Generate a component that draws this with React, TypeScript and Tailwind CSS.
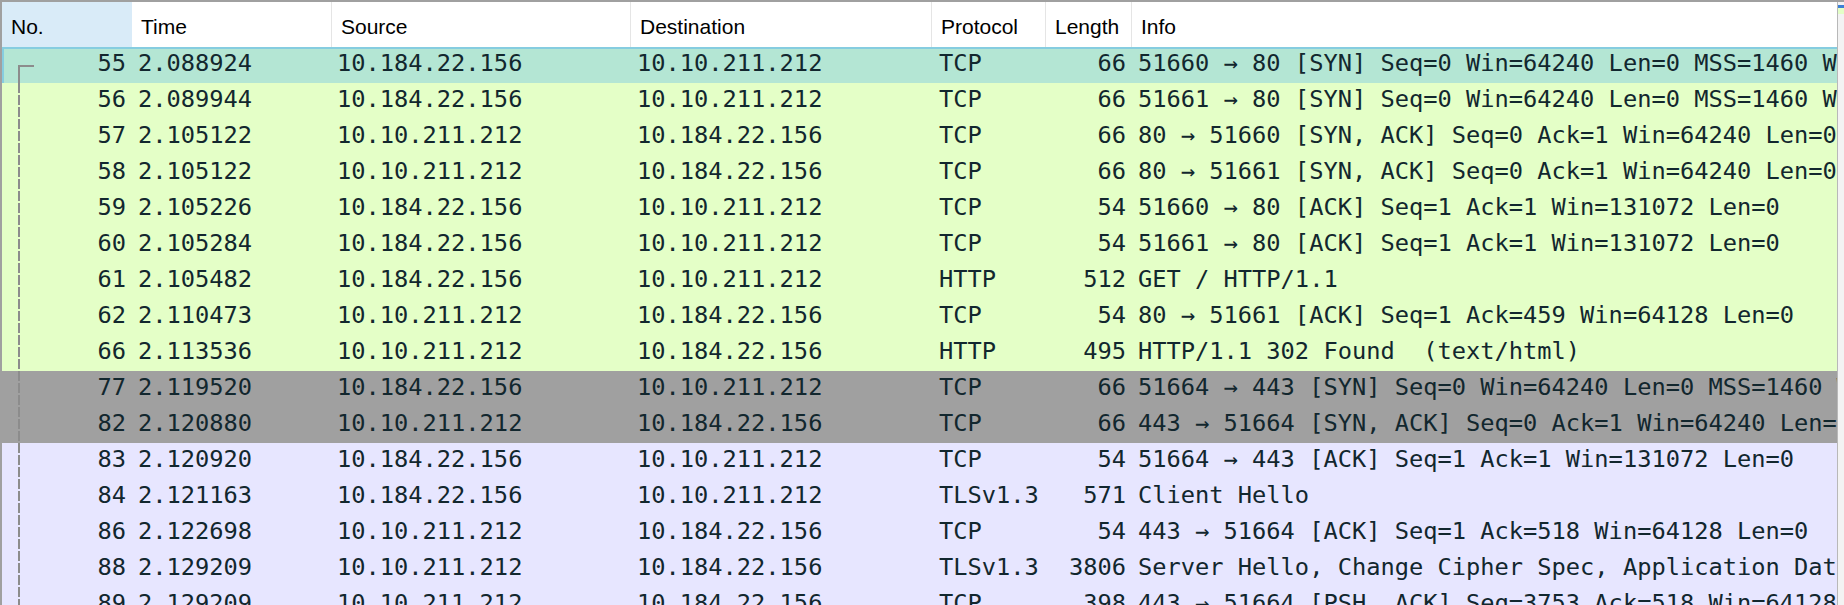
import React from 'react';

type Packet = {
  no: number;
  time: string;
  src: string;
  dst: string;
  proto: string;
  len: number;
  info: string;
  kind: 'sel' | 'http' | 'syn' | 'tcp';
};

const packets: Packet[] = [
  { no: 55, time: '2.088924', src: '10.184.22.156', dst: '10.10.211.212', proto: 'TCP', len: 66, info: '51660 → 80 [SYN] Seq=0 Win=64240 Len=0 MSS=1460 WS=256 SACK_PERM', kind: 'sel' },
  { no: 56, time: '2.089944', src: '10.184.22.156', dst: '10.10.211.212', proto: 'TCP', len: 66, info: '51661 → 80 [SYN] Seq=0 Win=64240 Len=0 MSS=1460 WS=256 SACK_PERM', kind: 'http' },
  { no: 57, time: '2.105122', src: '10.10.211.212', dst: '10.184.22.156', proto: 'TCP', len: 66, info: '80 → 51660 [SYN, ACK] Seq=0 Ack=1 Win=64240 Len=0 MSS=1460 WS=256 SACK_PERM', kind: 'http' },
  { no: 58, time: '2.105122', src: '10.10.211.212', dst: '10.184.22.156', proto: 'TCP', len: 66, info: '80 → 51661 [SYN, ACK] Seq=0 Ack=1 Win=64240 Len=0 MSS=1460 WS=256 SACK_PERM', kind: 'http' },
  { no: 59, time: '2.105226', src: '10.184.22.156', dst: '10.10.211.212', proto: 'TCP', len: 54, info: '51660 → 80 [ACK] Seq=1 Ack=1 Win=131072 Len=0', kind: 'http' },
  { no: 60, time: '2.105284', src: '10.184.22.156', dst: '10.10.211.212', proto: 'TCP', len: 54, info: '51661 → 80 [ACK] Seq=1 Ack=1 Win=131072 Len=0', kind: 'http' },
  { no: 61, time: '2.105482', src: '10.184.22.156', dst: '10.10.211.212', proto: 'HTTP', len: 512, info: 'GET / HTTP/1.1', kind: 'http' },
  { no: 62, time: '2.110473', src: '10.10.211.212', dst: '10.184.22.156', proto: 'TCP', len: 54, info: '80 → 51661 [ACK] Seq=1 Ack=459 Win=64128 Len=0', kind: 'http' },
  { no: 66, time: '2.113536', src: '10.10.211.212', dst: '10.184.22.156', proto: 'HTTP', len: 495, info: 'HTTP/1.1 302 Found  (text/html)', kind: 'http' },
  { no: 77, time: '2.119520', src: '10.184.22.156', dst: '10.10.211.212', proto: 'TCP', len: 66, info: '51664 → 443 [SYN] Seq=0 Win=64240 Len=0 MSS=1460 WS=256 SACK_PERM', kind: 'syn' },
  { no: 82, time: '2.120880', src: '10.10.211.212', dst: '10.184.22.156', proto: 'TCP', len: 66, info: '443 → 51664 [SYN, ACK] Seq=0 Ack=1 Win=64240 Len=0 MSS=1460 WS=256 SACK_PERM', kind: 'syn' },
  { no: 83, time: '2.120920', src: '10.184.22.156', dst: '10.10.211.212', proto: 'TCP', len: 54, info: '51664 → 443 [ACK] Seq=1 Ack=1 Win=131072 Len=0', kind: 'tcp' },
  { no: 84, time: '2.121163', src: '10.184.22.156', dst: '10.10.211.212', proto: 'TLSv1.3', len: 571, info: 'Client Hello', kind: 'tcp' },
  { no: 86, time: '2.122698', src: '10.10.211.212', dst: '10.184.22.156', proto: 'TCP', len: 54, info: '443 → 51664 [ACK] Seq=1 Ack=518 Win=64128 Len=0', kind: 'tcp' },
  { no: 88, time: '2.129209', src: '10.10.211.212', dst: '10.184.22.156', proto: 'TLSv1.3', len: 3806, info: 'Server Hello, Change Cipher Spec, Application Data', kind: 'tcp' },
  { no: 89, time: '2.129209', src: '10.10.211.212', dst: '10.184.22.156', proto: 'TCP', len: 398, info: '443 → 51664 [PSH, ACK] Seq=3753 Ack=518 Win=64128 Len=344', kind: 'tcp' },
];

const rowBg: Record<Packet['kind'], string> = {
  sel: 'bg-[#b4e6d4] shadow-[inset_2px_2px_0_#86cde0]',
  http: 'bg-[#e4ffc7]',
  syn: 'bg-[#a0a0a0]',
  tcp: 'bg-[#e7e6ff]',
};

function HeaderCell({ label, className = '' }: { label: string; className?: string }) {
  return (
    <div className={`h-[45px] shrink-0 pt-[13px] pl-[9px] leading-[24px] ${className}`}>{label}</div>
  );
}

function PacketRow({ p, first }: { p: Packet; first: boolean }) {
  return (
    <div className={`flex h-[36px] shrink-0 leading-[32px] text-[#12272e] ${rowBg[p.kind]}`}>
      {/* No. + conversation tree line */}
      <div className="relative w-[130px] shrink-0 pr-[6px] text-right">
        {first ? (
          <>
            <div className="absolute left-[16px] top-[18px] h-[2px] w-[16px] bg-[#8c8c8c]" />
            <div className="absolute left-[16px] top-[18px] bottom-0 w-[2px] bg-[#8c8c8c]" />
          </>
        ) : (
          <div className="absolute left-[16px] top-0 bottom-0 w-[2px] bg-[repeating-linear-gradient(to_bottom,#8c8c8c_0px,#8c8c8c_10px,transparent_10px,transparent_12px)]" />
        )}
        {p.no}
      </div>
      <div className="w-[200px] shrink-0 pl-[6px]">{p.time}</div>
      <div className="w-[299px] shrink-0 pl-[5px]">{p.src}</div>
      <div className="w-[301px] shrink-0 pl-[6px]">{p.dst}</div>
      <div className="w-[114px] shrink-0 pl-[7px]">{p.proto}</div>
      <div className="w-[86px] shrink-0 pr-[6px] text-right">{p.len}</div>
      <div className="min-w-0 flex-1 overflow-hidden whitespace-pre pl-[6px]">{p.info}</div>
    </div>
  );
}

export default function App() {
  return (
    <div className="flex h-[605px] w-[1844px] overflow-hidden border-t-2 border-[#a0a0a0] bg-white">
      <div className="flex min-w-0 flex-1 flex-col border-l-2 border-[#a0a0a0]">
        {/* Column headers */}
        <div className="flex shrink-0 bg-white text-[21px] text-black [font-family:'Liberation_Sans',Arial,sans-serif]">
          <HeaderCell label="No." className="w-[130px] bg-[#d9ebf8]" />
          <HeaderCell label="Time" className="w-[200px] border-r border-[#e5e5e5]" />
          <HeaderCell label="Source" className="w-[299px] border-r border-[#e5e5e5]" />
          <HeaderCell label="Destination" className="w-[301px] border-r border-[#e5e5e5]" />
          <HeaderCell label="Protocol" className="w-[114px] border-r border-[#e5e5e5]" />
          <HeaderCell label="Length" className="w-[86px] border-r border-[#e5e5e5]" />
          <HeaderCell label="Info" className="flex-1" />
        </div>

        {/* Packet list */}
        <div className="flex flex-col text-[23.7px] [font-family:'DejaVu_Sans_Mono','Liberation_Mono',monospace]">
          {packets.map((p, i) => (
            <PacketRow key={p.no} p={p} first={i === 0} />
          ))}
        </div>
      </div>

      {/* Scrollbar edge */}
      <div className="flex w-[7px] shrink-0 flex-col border-l border-[#b8b8b8] bg-[#f3f3f3]">
        <div className="mt-[3px] h-[3px] w-full bg-[#3c7fd6]" />
        <div className="h-[6px] w-full bg-[#e4ffc7]" />
      </div>
    </div>
  );
}
